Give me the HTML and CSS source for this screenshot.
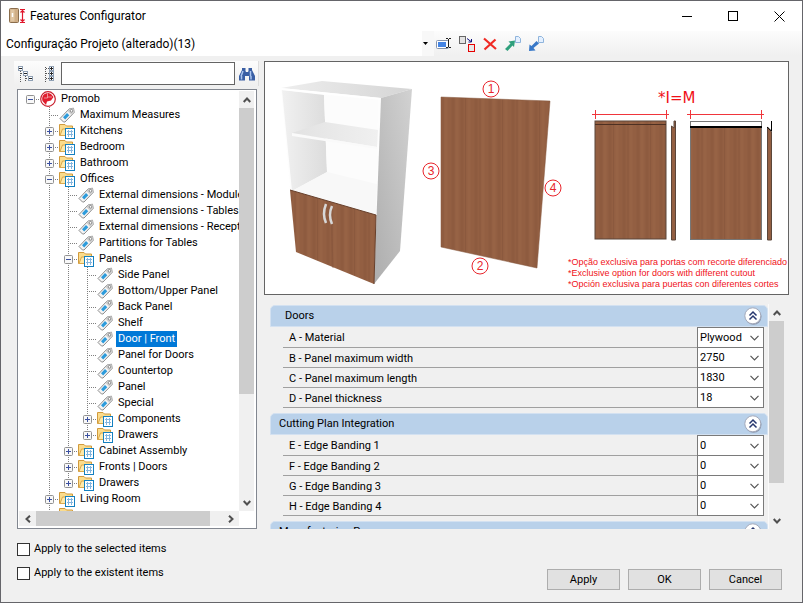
FILE: index.html
```html
<!DOCTYPE html>
<html lang="en">
<head>
  <meta charset="UTF-8">
  <title>Features Configurator</title>
  <link rel="stylesheet" href="styles.css">
</head>
<body>

  <!-- shared icons -->
  <svg class="defs" width="0" height="0" aria-hidden="true">
    <symbol id="tag" viewBox="0 0 16 16">
      <path d="M1 11.5 L10 2 L14.5 1.2 L15.2 5.5 L6 15 L4.5 15 Z" fill="#f4f4f4" stroke="#8c8c8c"/>
      <path d="M10 2 L14.5 1.2 L15.2 5.5 L12.5 8 L8.5 4 Z" fill="#cfcfcf"/>
      <circle cx="12.5" cy="3.8" r="1.3" fill="#fff" stroke="#777" stroke-width=".8"/>
      <path d="M4 10.2 L8 6 L10.3 8.3 L6.2 12.4 Z" fill="#2d9bdb"/>
    </symbol>
    <symbol id="folder" viewBox="0 0 16 16">
      <path d="M.5 12.5 V1.5 H6 L7.5 3 H13.5 V12.5 Z" fill="#fbdc8c" stroke="#d19a3c"/>
      <path d="M1 12.5 L3.5 6 H14 V12.5 Z" fill="#ffe9a9" stroke="#dba94d"/>
      <rect x="6.5" y="5.5" width="9" height="10" fill="#fff" stroke="#1480c0"/>
      <path d="M8 8.5 H14 M8 11.5 H14 M9.5 7 V14 M12.5 7 V14" stroke="#84b6df"/>
    </symbol>
    <symbol id="plus" viewBox="0 0 9 9">
      <rect x=".5" y=".5" width="8" height="8" rx="1" fill="#f8f8f8" stroke="#919191"/>
      <path d="M2 4.5 H7 M4.5 2 V7" stroke="#3a4fa0"/>
    </symbol>
    <symbol id="minus" viewBox="0 0 9 9">
      <rect x=".5" y=".5" width="8" height="8" rx="1" fill="#f8f8f8" stroke="#919191"/>
      <path d="M2 4.5 H7" stroke="#3a4fa0"/>
    </symbol>
    <symbol id="chevron" viewBox="0 0 9 6">
      <path d="M.5 .8 L4.5 4.8 L8.5 .8" fill="none" stroke="#555" stroke-width="1.2"/>
    </symbol>
    <symbol id="arrow" viewBox="0 0 8 6">
      <path d="M.7 5 L4 1.5 L7.3 5" fill="none" stroke="#505050" stroke-width="2"/>
    </symbol>
    <symbol id="collapse" viewBox="0 0 18 18">
      <circle cx="9.5" cy="9.8" r="8" fill="#8b96ad"/>
      <circle cx="8.8" cy="8.8" r="8" fill="#fff" stroke="#a3a9ba"/>
      <path d="M5.5 8.5 L9 5 L12.5 8.5 M5.5 12.5 L9 9 L12.5 12.5" fill="none" stroke="#27376e" stroke-width="1.5"/>
    </symbol>
  </svg>

  <div class="window">
    <header class="titlebar">
      <svg class="app-icon" width="17" height="16" viewBox="0 0 17 16">
        <rect x=".5" y=".5" width="9" height="14" rx="1" fill="#cfae86" stroke="#8a6d4c"/>
        <rect x="1.5" y="1.5" width="4" height="12" fill="#e0c6a3"/>
        <path d="M3.5 5 V9" stroke="#fff" stroke-width="1.5"/>
        <path d="M11 1.5 H16 M11 14.5 H16 M13.5 2 V14 M11.5 4.5 L13.5 2.5 L15.5 4.5 M11.5 11.5 L13.5 13.5 L15.5 11.5" fill="none" stroke="#e0162b" stroke-width="1.2"/>
      </svg>
      <h1>Features Configurator</h1>
      <button class="win-btn" type="button" aria-label="Minimize"><svg width="11" height="11"><path d="M0 5.5 H10" stroke="#000"/></svg></button>
      <button class="win-btn" type="button" aria-label="Maximize"><svg width="11" height="11"><rect x=".5" y=".5" width="9" height="9" fill="none" stroke="#000"/></svg></button>
      <button class="win-btn" type="button" aria-label="Close"><svg width="11" height="11"><path d="M.5 .5 L10.5 10.5 M10.5 .5 L.5 10.5" stroke="#000"/></svg></button>
    </header>

    <div class="toolbar">
      <div class="project">
        <select aria-label="Project">
          <option>Configuração Projeto (alterado)(13)</option>
        </select>
        <svg width="5" height="3"><path d="M0 0 H5 L2.5 3 Z"/></svg>
      </div>
      <button class="tool" type="button" aria-label="Rename">
        <svg width="16" height="16" viewBox="0 0 16 16">
          <rect x=".5" y="4.500" width="12" height="8" rx="1" fill="#fff" stroke="#8594ad"/>
          <rect x="2" y="6" width="8" height="5" fill="#4484e4"/>
          <path d="M10 2.500 H12 M13 2.500 H15 M10 11.500 H12 M13 11.500 H15 M12.500 3 V11" stroke="#222"/>
        </svg>
      </button>
      <button class="tool" type="button" aria-label="Copy">
        <svg width="16" height="16" viewBox="0 0 16 16">
          <rect x=".5" y=".5" width="6" height="7" fill="#e3e3e3" stroke="#666"/>
          <rect x="9.500" y="8.500" width="6" height="7" fill="#e8e8e8" stroke="#e60000"/>
          <path d="M8 2.500 L12 5.500 M12.500 3 V6 H9.500" fill="none" stroke="#10107c"/>
        </svg>
      </button>
      <button class="tool" type="button" aria-label="Delete">
        <svg width="16" height="16" viewBox="0 0 16 16">
          <path d="M2 2.500 L14 13 M13.500 3.500 L2.500 13.500" stroke="#f02a24" stroke-width="2.200"/>
        </svg>
      </button>
      <button class="tool" type="button" aria-label="Export">
        <svg width="16" height="16" viewBox="0 0 16 16">
          <path d="M10.500 .5 H13.500 L15.500 2.500 V6.500 H10.500 Z" fill="#e4f0ff" stroke="#8fb4dc"/>
          <path d="M0 13 L5.500 7.500 L3.500 5.500 L10 4.500 L9 11 L7.500 9.500 L2.500 15 Z" fill="#2fa07c"/>
        </svg>
      </button>
      <button class="tool" type="button" aria-label="Import">
        <svg width="16" height="16" viewBox="0 0 16 16">
          <path d="M10.500 .5 H13.500 L15.500 2.500 V6.500 H10.500 Z" fill="#e4f0ff" stroke="#8fb4dc"/>
          <path d="M1 15 L1.500 8.500 L3.500 10 L8.500 5 L11 7.500 L5.500 12 L7.500 14.500 Z" fill="#3878c8"/>
        </svg>
      </button>
    </div>

    <main class="content">
      <section class="browser">
        <div class="search">
          <button class="tool" type="button" aria-label="Collapse all">
            <svg width="16" height="16" viewBox="0 0 16 16">
              <path d="M2.500 5 V16 M7.500 10 V16 M3 7.500 H6 M8 12.500 H11" stroke="#555" stroke-dasharray="1 1"/>
              <rect x=".5" y=".5" width="4" height="4" fill="#fff" stroke="#8fa0b4"/>
              <rect x="5.500" y="5.500" width="4" height="4" fill="#fff" stroke="#8fa0b4"/>
              <rect x="10.500" y="10.500" width="4" height="4" fill="#fff" stroke="#8fa0b4"/>
              <path d="M1 2.500 H4 M6 7.500 H9 M11 12.500 H14" stroke="#222"/>
            </svg>
          </button>
          <button class="tool" type="button" aria-label="Expand all">
            <svg width="16" height="16" viewBox="0 0 16 16">
              <path d="M4.500 1 V16 M5 2.500 H8 M5 7.500 H8 M5 12.500 H8" stroke="#555" stroke-dasharray="1 1"/>
              <rect x="8.500" y=".5" width="4" height="4" fill="#fff" stroke="#8fa0b4"/>
              <rect x="8.500" y="5.500" width="4" height="4" fill="#fff" stroke="#8fa0b4"/>
              <rect x="8.500" y="10.500" width="4" height="4" fill="#fff" stroke="#8fa0b4"/>
              <path d="M9 2.500 H12 M9 7.500 H12 M9 12.500 H12 M10.500 1 V4 M10.500 6 V9 M10.500 11 V14" stroke="#222"/>
            </svg>
          </button>
          <input type="text" aria-label="Search">
          <button class="tool" type="button" aria-label="Find">
            <svg width="16" height="14" viewBox="0 0 16 14">
              <path d="M3 1 H6.500 V4 L7 5 H9 L9.500 4 V1 H13 V3 L16 9 V13.500 H10 V9 H6 V13.500 H0 V9 L3 3 Z" fill="#3a5fa4"/>
              <path d="M2 9.500 L4 4 M11.500 9.500 V4 M2.500 9 V12.500 M12 9 V12.500" stroke="#a9c4ee" stroke-width="1.500"/>
            </svg>
          </button>
        </div>

        <div class="tree-box">
          <div class="tree-view">
            <ul class="tree">
              <li>
                <div class="node">
                  <button class="toggle" type="button" aria-label="Collapse"><svg><use href="#minus"/></svg></button>
                  <svg class="icon" viewBox="0 0 16 16">
                    <circle cx="8" cy="8" r="7.300" fill="#fff" stroke="#c81f2d" stroke-width="1.200"/>
                    <path d="M8.500 2 C3 2 1.500 6 2.500 10 L6 14 L7 10.500 L11 9.500 L13.500 6 L11 3 Z" fill="#e01e2e"/>
                    <path d="M7.500 2.500 V7 H4 M8 6 H12" fill="none" stroke="#fff" stroke-width=".5"/>
                  </svg>
                  <span class="label">Promob</span>
                </div>
                <ul>
                  <li><div class="node"><span class="toggle"></span><svg class="icon"><use href="#tag"/></svg><span class="label">Maximum Measures</span></div></li>
                  <li><div class="node"><button class="toggle" type="button" aria-label="Expand"><svg><use href="#plus"/></svg></button><svg class="icon"><use href="#folder"/></svg><span class="label">Kitchens</span></div></li>
                  <li><div class="node"><button class="toggle" type="button" aria-label="Expand"><svg><use href="#plus"/></svg></button><svg class="icon"><use href="#folder"/></svg><span class="label">Bedroom</span></div></li>
                  <li><div class="node"><button class="toggle" type="button" aria-label="Expand"><svg><use href="#plus"/></svg></button><svg class="icon"><use href="#folder"/></svg><span class="label">Bathroom</span></div></li>
                  <li>
                    <div class="node"><button class="toggle" type="button" aria-label="Collapse"><svg><use href="#minus"/></svg></button><svg class="icon"><use href="#folder"/></svg><span class="label">Offices</span></div>
                    <ul>
                      <li><div class="node"><span class="toggle"></span><svg class="icon"><use href="#tag"/></svg><span class="label">External dimensions - Modules</span></div></li>
                      <li><div class="node"><span class="toggle"></span><svg class="icon"><use href="#tag"/></svg><span class="label">External dimensions - Tables</span></div></li>
                      <li><div class="node"><span class="toggle"></span><svg class="icon"><use href="#tag"/></svg><span class="label">External dimensions - Reception</span></div></li>
                      <li><div class="node"><span class="toggle"></span><svg class="icon"><use href="#tag"/></svg><span class="label">Partitions for Tables</span></div></li>
                      <li>
                        <div class="node"><button class="toggle" type="button" aria-label="Collapse"><svg><use href="#minus"/></svg></button><svg class="icon"><use href="#folder"/></svg><span class="label">Panels</span></div>
                        <ul>
                          <li><div class="node"><span class="toggle"></span><svg class="icon"><use href="#tag"/></svg><span class="label">Side Panel</span></div></li>
                          <li><div class="node"><span class="toggle"></span><svg class="icon"><use href="#tag"/></svg><span class="label">Bottom/Upper Panel</span></div></li>
                          <li><div class="node"><span class="toggle"></span><svg class="icon"><use href="#tag"/></svg><span class="label">Back Panel</span></div></li>
                          <li><div class="node"><span class="toggle"></span><svg class="icon"><use href="#tag"/></svg><span class="label">Shelf</span></div></li>
                          <li><div class="node"><span class="toggle"></span><svg class="icon"><use href="#tag"/></svg><span class="label selected">Door | Front</span></div></li>
                          <li><div class="node"><span class="toggle"></span><svg class="icon"><use href="#tag"/></svg><span class="label">Panel for Doors</span></div></li>
                          <li><div class="node"><span class="toggle"></span><svg class="icon"><use href="#tag"/></svg><span class="label">Countertop</span></div></li>
                          <li><div class="node"><span class="toggle"></span><svg class="icon"><use href="#tag"/></svg><span class="label">Panel</span></div></li>
                          <li><div class="node"><span class="toggle"></span><svg class="icon"><use href="#tag"/></svg><span class="label">Special</span></div></li>
                          <li><div class="node"><button class="toggle" type="button" aria-label="Expand"><svg><use href="#plus"/></svg></button><svg class="icon"><use href="#folder"/></svg><span class="label">Components</span></div></li>
                          <li><div class="node"><button class="toggle" type="button" aria-label="Expand"><svg><use href="#plus"/></svg></button><svg class="icon"><use href="#folder"/></svg><span class="label">Drawers</span></div></li>
                        </ul>
                      </li>
                      <li><div class="node"><button class="toggle" type="button" aria-label="Expand"><svg><use href="#plus"/></svg></button><svg class="icon"><use href="#folder"/></svg><span class="label">Cabinet Assembly</span></div></li>
                      <li><div class="node"><button class="toggle" type="button" aria-label="Expand"><svg><use href="#plus"/></svg></button><svg class="icon"><use href="#folder"/></svg><span class="label">Fronts | Doors</span></div></li>
                      <li><div class="node"><button class="toggle" type="button" aria-label="Expand"><svg><use href="#plus"/></svg></button><svg class="icon"><use href="#folder"/></svg><span class="label">Drawers</span></div></li>
                    </ul>
                  </li>
                  <li><div class="node"><button class="toggle" type="button" aria-label="Expand"><svg><use href="#plus"/></svg></button><svg class="icon"><use href="#folder"/></svg><span class="label">Living Room</span></div></li>
                  <li><div class="node"><span class="toggle"></span><svg class="icon"><use href="#folder"/></svg></div></li>
                </ul>
              </li>
            </ul>
          </div>
          <div class="scroll-y">
            <button type="button" aria-label="Scroll up"><svg><use href="#arrow"/></svg></button>
            <div class="thumb tree-thumb-y"></div>
            <button class="down" type="button" aria-label="Scroll down"><svg><use href="#arrow"/></svg></button>
          </div>
          <div class="scroll-x">
            <button class="left" type="button" aria-label="Scroll left"><svg><use href="#arrow"/></svg></button>
            <div class="thumb tree-thumb-x"></div>
            <button class="right" type="button" aria-label="Scroll right"><svg><use href="#arrow"/></svg></button>
          </div>
        </div>
      </section>

      <section class="details">
        <div class="preview">
          <svg viewBox="0 0 523 232" role="img" aria-label="Door front preview">
            <defs>
              <pattern id="wood" width="37" height="240" patternUnits="userSpaceOnUse">
                <rect width="37" height="240" fill="#935f42"/>
                <path d="M3 0 V240 M12 0 V240 M26 0 V240" stroke="#8e5b3f" stroke-width="3"/>
                <path d="M7 0 V240 M19 0 V240 M33 0 V240" stroke="#976345" stroke-width="3"/>
                <path d="M15.500 0 V240 M30 0 V240" stroke="#8b593e"/>
              </pattern>
              <linearGradient id="side" x1="0" y1="1" x2="1" y2="0">
                <stop offset="0" stop-color="#adadad"/>
                <stop offset="1" stop-color="#d2d2d2"/>
              </linearGradient>
              <linearGradient id="inner">
                <stop offset="0" stop-color="#f1f1f1"/>
                <stop offset="1" stop-color="#dcdcdc"/>
              </linearGradient>
              <linearGradient id="top">
                <stop offset="0" stop-color="#eee"/>
                <stop offset="1" stop-color="#d5d5d5"/>
              </linearGradient>
              <linearGradient id="shelf">
                <stop offset="0" stop-color="#e2e2e2"/>
                <stop offset="1" stop-color="#f0f0f0"/>
              </linearGradient>
            </defs>

            <!-- cabinet -->
            <path d="M16 26 L116 36 L109 222 L31 190 Z" fill="#fdfdfd"/>
            <path d="M17 28 L59 33 L62 110 L27 129 Z" fill="url(#inner)"/>
            <path d="M59 33 L113 38 L112 122 L62 110 Z" fill="#fcfcfc"/>
            <path d="M27 129 L62 110 L112 122 L111 152 Z" fill="#f8f8f8"/>
            <path d="M27 71 L60 60 L113 68 L112 85 Z" fill="url(#shelf)"/>
            <path d="M27 71 L112 85 V87 L27 74 Z" fill="#fafafa"/>
            <path d="M16 26 L57 19 L147 27 L116 36 Z" fill="url(#top)"/>
            <path d="M16 26 L116 36 V38 L16 28 Z" fill="#fff"/>
            <path d="M116 36 L147 27 L135 189 L109 222 Z" fill="url(#side)"/>
            <path d="M25 128 L111 153 L109 222 L31 190 Z" fill="url(#wood)"/>
            <path d="M25 128 L111 153 L109 222" fill="none" stroke="#67402c"/>
            <path d="M66 141 L68 206" stroke="#86563c" stroke-width=".6"/>
            <path d="M61 142 Q57 152 61 161 M67 144 Q63 153 67 162" fill="none" stroke="#d8d8d8" stroke-width="2.500"/>

            <!-- numbered panel -->
            <path d="M176 35 L285 39 L272 206 L176 185 Z" fill="url(#wood)" stroke="#84563d" stroke-width=".5"/>
            <g class="marks">
              <circle cx="226" cy="27" r="8"/><text x="226" y="31">1</text>
              <circle cx="215" cy="204" r="8"/><text x="215" y="208">2</text>
              <circle cx="166" cy="109" r="8"/><text x="166" y="113">3</text>
              <circle cx="288" cy="126" r="8"/><text x="288" y="130">4</text>
            </g>

            <!-- cutouts -->
            <text class="formula" x="393" y="41">*I=M</text>
            <path d="M327 52.500 H404 M330.500 48 V57 M401.500 48 V57 M422 52.500 H499 M425.500 48 V57 M496.500 48 V57" stroke="#f0353b"/>
            <rect x="330" y="59" width="71" height="118" fill="url(#wood)" stroke="#5b463a"/>
            <path d="M330 62.500 H401" stroke="#4d3022"/>
            <path d="M406.500 178 V64 L409 66 V59 H410.500 V178 Z" fill="#935f42" stroke="#5b463a"/>
            <rect x="425.500" y="59.500" width="71" height="118" fill="#fff" stroke="#777"/>
            <rect x="426" y="65" width="70" height="112" fill="url(#wood)"/>
            <path d="M425 65 H497" stroke="#000" stroke-width="2"/>
            <path d="M502.500 178 V65 L506.500 70 V178 Z" fill="#935f42" stroke="#5b463a"/>
            <path d="M502 65 L506.500 69 V59" fill="none" stroke="#000"/>

            <g class="notes">
              <text x="303" y="203">*Opção exclusiva para portas com recorte diferenciado</text>
              <text x="303" y="214">*Exclusive option for doors with different cutout</text>
              <text x="303" y="225">*Opción exclusiva para puertas con diferentes cortes</text>
            </g>
          </svg>
        </div>

        <div class="properties">
          <div class="groups">
            <section class="group">
              <header class="first"><h2>Doors</h2><button type="button" aria-label="Collapse Doors"><svg width="18" height="18"><use href="#collapse"/></svg></button></header>
              <div class="field"><label for="material">A - Material</label><div class="combo"><select id="material"><option>Plywood</option></select><svg><use href="#chevron"/></svg></div></div>
              <div class="field"><label for="width">B - Panel maximum width</label><div class="combo"><select id="width"><option>2750</option></select><svg><use href="#chevron"/></svg></div></div>
              <div class="field"><label for="length">C - Panel maximum length</label><div class="combo"><select id="length"><option>1830</option></select><svg><use href="#chevron"/></svg></div></div>
              <div class="field"><label for="thickness">D - Panel thickness</label><div class="combo"><select id="thickness"><option>18</option></select><svg><use href="#chevron"/></svg></div></div>
            </section>
            <section class="group">
              <header><h2>Cutting Plan Integration</h2><button type="button" aria-label="Collapse Cutting Plan Integration"><svg width="18" height="18"><use href="#collapse"/></svg></button></header>
              <div class="field"><label for="edge1">E - Edge Banding 1</label><div class="combo"><select id="edge1"><option>0</option></select><svg><use href="#chevron"/></svg></div></div>
              <div class="field"><label for="edge2">F - Edge Banding 2</label><div class="combo"><select id="edge2"><option>0</option></select><svg><use href="#chevron"/></svg></div></div>
              <div class="field"><label for="edge3">G - Edge Banding 3</label><div class="combo"><select id="edge3"><option>0</option></select><svg><use href="#chevron"/></svg></div></div>
              <div class="field"><label for="edge4">H - Edge Banding 4</label><div class="combo"><select id="edge4"><option>0</option></select><svg><use href="#chevron"/></svg></div></div>
            </section>
            <section class="group">
              <header><h2>Manufacturing Process</h2><button type="button" aria-label="Collapse Manufacturing Process"><svg width="18" height="18"><use href="#collapse"/></svg></button></header>
            </section>
          </div>
          <div class="scroll-y">
            <button type="button" aria-label="Scroll up"><svg><use href="#arrow"/></svg></button>
            <div class="thumb group-thumb"></div>
            <button class="down" type="button" aria-label="Scroll down"><svg><use href="#arrow"/></svg></button>
          </div>
        </div>
      </section>
    </main>

    <footer class="footer">
      <div class="checks">
        <label><input type="checkbox">Apply to the selected items</label>
        <label><input type="checkbox">Apply to the existent items</label>
      </div>
      <div class="actions">
        <button type="button">Apply</button>
        <button type="button">OK</button>
        <button type="button">Cancel</button>
      </div>
    </footer>
  </div>

</body>
</html>
```
FILE: styles.css
```css
* {
  box-sizing: border-box;
}

body {
  display: flex;
  height: 100vh;
  margin: 0;
  padding: 0 9px 10px 0;
  background-color: #fff;
  color: #000;
  font: 11px/16px Roboto, "Liberation Sans", Arial, sans-serif;
}

button, input, select {
  margin: 0;
  padding: 0;
  border: none;
  border-radius: 0;
  background: none;
  color: inherit;
  font: inherit;
  appearance: none;
}

svg {
  display: block;
}

.defs {
  position: absolute;
}

.window {
  flex: 1;
  display: flex;
  flex-direction: column;
  min-width: 0;
  border: 1px solid #65656a;
  background-color: #f0f0f0;
}

/* title bar */
.titlebar {
  display: flex;
  align-items: center;
  height: 30px;
  padding-left: 8px;
  background-color: #fff;
}

.titlebar h1 {
  flex: 1;
  margin: 0 0 0 4px;
  font: 12px/16px Roboto, "Liberation Sans", sans-serif;
}

.win-btn {
  display: flex;
  align-items: center;
  justify-content: center;
  width: 46px;
  height: 30px;
}

/* project toolbar */
.toolbar {
  display: flex;
  height: 25px;
  background: linear-gradient(#fcfcfc, #f0f0f0);
}

.project {
  display: grid;
  align-items: center;
  width: 54%;
  margin-right: -1px;
  background: linear-gradient(to left, #f8f8f8 12px, #fff 12px);
}

.project select, .project svg {
  grid-area: 1 / 1;
}

.project select {
  height: 25px;
  padding: 0 16px 0 5px;
  font: 12px/16px Roboto, "Liberation Sans", sans-serif;
}

.project svg {
  justify-self: end;
  margin-right: 6px;
  pointer-events: none;
}

.tool {
  display: flex;
  align-items: center;
  justify-content: center;
  width: 23px;
  height: 25px;
}

/* main area */
.content {
  flex: 1;
  display: grid;
  grid-template-columns: 245px minmax(0, 1fr);
  gap: 5px;
  min-height: 0;
  padding: 5px 13px 0;
}

.browser, .details {
  display: flex;
  flex-direction: column;
  min-height: 0;
}

.search {
  display: flex;
  align-items: center;
  height: 25px;
  margin-bottom: 3px;
  border-right: 1px solid #ddd;
  background: linear-gradient(#fcfcfc, #f0f0f0);
}

.search input {
  flex: 1;
  min-width: 0;
  height: 23px;
  margin-left: 1px;
  padding: 0 4px;
  border: 1px solid #646464;
  background-color: #fff;
}

/* tree */
.tree-box {
  flex: 1;
  display: grid;
  grid-template: minmax(0, 1fr) 15px / minmax(0, 1fr) 15px;
  min-height: 0;
  margin: 0 2px 0 3px;
  padding: 1px 2px 2px 1px;
  border: 1px solid #828790;
  background-color: #fff;
}

.tree-view {
  overflow: hidden;
  padding-left: 2px;
}

.tree, .tree ul {
  margin: 0;
  padding: 0;
  list-style: none;
}

.tree ul {
  margin-left: 19px;
}

.tree ul > li {
  background: repeating-linear-gradient(#808080 0 1px, transparent 1px 2px) 9px 0 / 1px 100% no-repeat;
}

.tree ul ul > li:last-child {
  background-size: 1px 9px;
}

.node {
  display: flex;
  align-items: center;
  height: 16px;
  white-space: nowrap;
}

.toggle {
  flex: none;
  display: flex;
  align-items: center;
  justify-content: center;
  width: 19px;
  height: 16px;
  background: repeating-linear-gradient(to right, #808080 0 1px, transparent 1px 2px) 9px 8px / 10px 1px no-repeat;
}

.toggle svg {
  width: 9px;
  height: 9px;
}

.icon {
  flex: none;
  width: 16px;
  height: 16px;
  margin-right: 3px;
}

.label {
  padding: 0 2px;
}

.selected {
  background-color: #0078d7;
  color: #fff;
}

/* scroll bars */
.scroll-y, .scroll-x {
  display: flex;
  background-color: #f0f0f0;
}

.scroll-y {
  flex-direction: column;
  width: 15px;
}

.scroll-x {
  height: 15px;
}

.scroll-y button, .scroll-x button {
  flex: none;
  display: flex;
  align-items: center;
  justify-content: center;
  width: 15px;
  height: 17px;
}

.scroll-x button {
  width: 17px;
  height: 15px;
}

.scroll-y svg, .scroll-x svg {
  width: 8px;
  height: 6px;
}

.scroll-y .down {
  margin-top: auto;
}

.scroll-x .right {
  margin-left: auto;
}

.down svg {
  transform: rotate(180deg);
}

.left svg {
  transform: rotate(-90deg);
}

.right svg {
  transform: rotate(90deg);
}

.thumb {
  background-color: #cdcdcd;
}

.tree-thumb-y {
  height: 68%;
}

.tree-thumb-x {
  width: 79%;
}

.group-thumb {
  height: 72%;
}

/* preview */
.preview {
  border: 1px solid #646464;
  background-color: #fff;
}

.preview svg {
  width: 100%;
}

.marks {
  fill: none;
  stroke: #e8252c;
}

.marks text {
  fill: #e8252c;
  stroke: none;
  font: 12px "Liberation Sans", Arial, sans-serif;
  text-anchor: middle;
}

.formula {
  fill: #f01018;
  font: 15px "DejaVu Sans", Verdana, sans-serif;
}

.notes {
  fill: #f01018;
  font: 9px "Liberation Sans", Arial, sans-serif;
}

/* property groups */
.properties {
  flex: 1;
  display: flex;
  min-height: 0;
  margin: 9px 5px 0 6px;
}

.groups {
  flex: 1;
  overflow: hidden;
  padding-top: 1px;
  border-right: 1px solid #fafafa;
}

.group {
  margin-bottom: 5px;
}

.group header {
  display: flex;
  align-items: center;
  justify-content: space-between;
  height: 22px;
  padding: 0 5px 0 8px;
  border: 1px solid #d3e1f1;
  border-radius: 5px 5px 0 0;
  background-color: #b9d1ea;
}

.group header.first {
  padding-left: 14px;
}

.group h2 {
  margin: 0;
  font: inherit;
}

.field {
  display: flex;
  align-items: center;
  height: 20px;
  margin: 0 4px 0 13px;
  border-bottom: 1px solid #a0a0a0;
}

.group header + .field {
  height: 21px;
}

.field label {
  flex: 1;
  padding: 2px 0 0 6px;
}

.combo {
  display: grid;
  align-items: center;
  align-self: stretch;
  width: 67px;
  margin-bottom: -1px;
  border: 1px solid #7a7a7a;
  border-top: none;
  background-color: #fff;
}

.group header + .field .combo {
  border-top: 1px solid #7a7a7a;
}

.combo select, .combo svg {
  grid-area: 1 / 1;
}

.combo select {
  height: 19px;
  padding: 0 16px 0 2px;
}

.combo svg {
  justify-self: end;
  width: 9px;
  height: 6px;
  margin-right: 4px;
  pointer-events: none;
}

/* footer */
.footer {
  display: flex;
  align-items: flex-end;
  justify-content: space-between;
  padding: 8px 20px 12px 16px;
}

.checks {
  display: flex;
  flex-direction: column;
  margin-bottom: 5px;
}

.checks label {
  display: flex;
  align-items: center;
  gap: 4px;
  height: 24px;
}

.checks input {
  width: 13px;
  height: 13px;
  border: 1px solid #333;
  background-color: #fff;
}

.actions {
  display: flex;
  gap: 8px;
}

.actions button {
  width: 73px;
  height: 21px;
  border: 1px solid #adadad;
  background-color: #e1e1e1;
}
```
